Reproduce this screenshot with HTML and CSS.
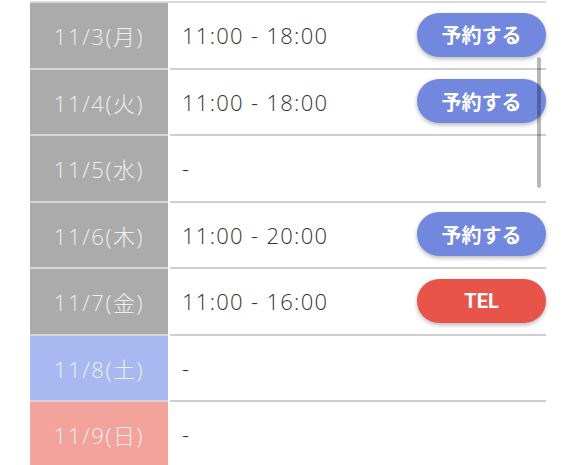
FILE: index.html
```html
<!DOCTYPE html>
<html lang="ja">
<head>
<meta charset="utf-8">
<title>営業日</title>
<link rel="stylesheet" href="styles.css">
</head>
<body>
<div class="schedule">
  <div class="row">
    <div class="date weekday">11/3(月)</div>
    <div class="time"><span class="hours">11:00 - 18:00</span><button class="btn reserve">予約する</button></div>
  </div>
  <div class="row">
    <div class="date weekday">11/4(火)</div>
    <div class="time"><span class="hours">11:00 - 18:00</span><button class="btn reserve">予約する</button></div>
  </div>
  <div class="row">
    <div class="date weekday">11/5(水)</div>
    <div class="time"><span class="hours">-</span></div>
  </div>
  <div class="row">
    <div class="date weekday">11/6(木)</div>
    <div class="time"><span class="hours">11:00 - 20:00</span><button class="btn reserve">予約する</button></div>
  </div>
  <div class="row">
    <div class="date weekday">11/7(金)</div>
    <div class="time"><span class="hours">11:00 - 16:00</span><button class="btn tel">TEL</button></div>
  </div>
  <div class="row">
    <div class="date saturday">11/8(土)</div>
    <div class="time"><span class="hours">-</span></div>
  </div>
  <div class="row">
    <div class="date sunday">11/9(日)</div>
    <div class="time"><span class="hours">-</span></div>
  </div>
  <div class="scrollbar"></div>
</div>
</body>
</html>
```
FILE: styles.css
```css
html, body {
  margin: 0;
  padding: 0;
  background: #ffffff;
  overflow: hidden;
}
body {
  font-family: "Open Sans", "Noto Sans CJK JP", sans-serif;
  color: #333333;
}
.schedule {
  position: relative;
  margin: 1px 30px 0 30px;
  border-top: 2px solid #d9d9d9;
}
.row {
  display: flex;
  height: 66.5px;
  box-sizing: border-box;
}
.date {
  width: 138px;
  flex: none;
  margin-right: 2px;
  display: flex;
  align-items: center;
  justify-content: center;
  font-size: 22px;
  font-weight: 300;
  letter-spacing: 1.6px;
  color: #efefef;
  border-bottom: 2px solid #d6d6d6;
  box-sizing: border-box;
}
.weekday { background: #ababab; }
.saturday { background: #a8b8f1; }
.sunday { background: #f3a39b; }
.time {
  flex: 1;
  display: flex;
  align-items: center;
  justify-content: space-between;
  padding-left: 12px;
  border-bottom: 2px solid #cfcfcf;
  box-sizing: border-box;
}
.hours {
  font-size: 22px;
  font-weight: 300;
  letter-spacing: 1.3px;
  color: #333333;
}
.btn {
  width: 129px;
  height: 44px;
  border: none;
  border-radius: 22px;
  color: #ffffff;
  font-family: "Noto Sans CJK JP", sans-serif;
  font-weight: 700;
  font-size: 20px;
  box-shadow: 0 2px 4px rgba(0, 0, 0, 0.28);
  padding: 0;
  margin-top: -1px;
}
.reserve { background: #7188de; }
.tel { background: #e8544a; font-family: Roboto, sans-serif; font-size: 20px; }
.scrollbar {
  position: absolute;
  left: 507px;
  top: 54px;
  width: 4px;
  height: 131px;
  border-radius: 2px;
  background: rgba(0, 0, 0, 0.28);
}
```
